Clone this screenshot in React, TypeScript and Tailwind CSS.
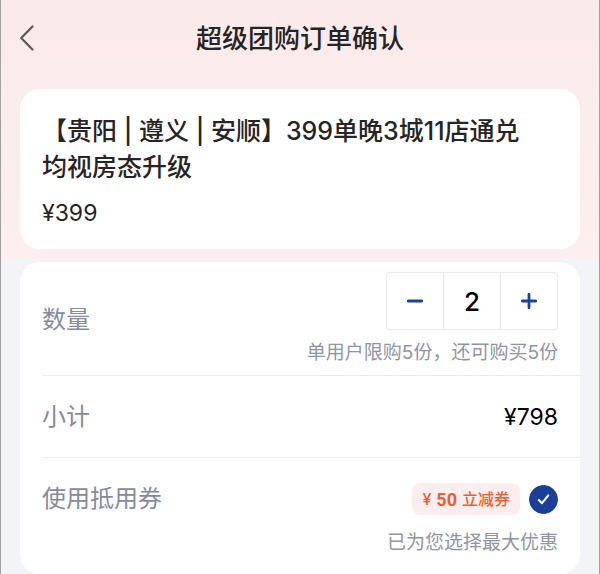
import { useState } from "react";

const PRICE = 399;
const LIMIT = 7;

const BackIcon = () => (
  <svg width="16" height="28" viewBox="0 0 16 28" fill="none" aria-hidden="true">
    <path
      d="M12.5 2.5L1.2 14L12.5 25.5"
      stroke="#5c5959"
      strokeWidth="2.2"
      strokeLinecap="round"
      strokeLinejoin="round"
    />
  </svg>
);

const MinusIcon = () => (
  <svg width="16" height="16" viewBox="0 0 16 16" fill="none" aria-hidden="true">
    <path d="M1.3 8H14.7" stroke="#1b419c" strokeWidth="2.8" strokeLinecap="round" />
  </svg>
);

const PlusIcon = () => (
  <svg width="16" height="16" viewBox="0 0 16 16" fill="none" aria-hidden="true">
    <path
      d="M1.3 8H14.7M8 1.3V14.7"
      stroke="#1b419c"
      strokeWidth="2.8"
      strokeLinecap="round"
    />
  </svg>
);

const CheckIcon = () => (
  <svg
    width="29"
    height="29"
    viewBox="0 0 29 29"
    fill="none"
    aria-hidden="true"
    className="pointer-events-none absolute inset-0"
  >
    <path
      d="M9.8 15L13 18.2L19.3 10.4"
      stroke="#fff"
      strokeWidth="2"
      strokeLinecap="round"
      strokeLinejoin="round"
    />
  </svg>
);

const App = () => {
  const [quantity, setQuantity] = useState(2);
  const [useCoupon, setUseCoupon] = useState(true);

  const changeQuantity = (value: number) => {
    if (!value || value < 1 || value > LIMIT) return;
    setQuantity(value);
  };

  return (
    <div
      lang="zh-CN"
      className="min-h-screen border-x border-[#a6a1a1] bg-[#f3f4f7] font-['Inter','Noto_Sans_CJK_SC',sans-serif] text-[#262424]"
    >
      <div className="bg-linear-to-b from-[#faebea] to-[#fcefed] px-[19px] pb-[9px]">
        <header className="grid h-[89px] grid-cols-[24px_1fr_24px] items-start pt-5">
          <button type="button" aria-label="返回" className="flex h-9 items-center">
            <BackIcon />
          </button>
          <h1 className="text-center text-[26px] leading-[38px] font-medium">
            超级团购订单确认
          </h1>
        </header>

        <section className="rounded-[20px] bg-white px-[22px] pt-6 pb-[18px]">
          <h2 className="text-[25px] leading-9 font-medium">
            【贵阳 | 遵义 | 安顺】399单晚3城11店通兑
            <br />
            均视房态升级
          </h2>
          <p className="mt-[10px] text-[23px] leading-9">¥{PRICE}</p>
        </section>
      </div>

      <main className="px-[19px] pt-1">
        <div className="rounded-[20px] bg-white pl-[22px]">
          <div className="flex items-center justify-between border-b border-[#ececef] pt-[10px] pr-[22px] pb-2">
            <label htmlFor="quantity" className="text-[24px] leading-9 text-[#848b9b]">
              数量
            </label>
            <div className="flex flex-col items-end gap-[9px]">
              <div className="flex h-[58px] w-[172px] divide-x divide-[#e9e9ec] rounded-sm border border-[#e9e9ec]">
                <button
                  type="button"
                  aria-label="减少"
                  className="flex flex-1 items-center justify-center"
                  onClick={() => changeQuantity(quantity - 1)}
                >
                  <MinusIcon />
                </button>
                <input
                  id="quantity"
                  inputMode="numeric"
                  value={quantity}
                  onChange={(e) => changeQuantity(Number(e.target.value))}
                  className="w-[57px] text-center text-[26px] font-medium text-black outline-none"
                />
                <button
                  type="button"
                  aria-label="增加"
                  className="flex flex-1 items-center justify-center"
                  onClick={() => changeQuantity(quantity + 1)}
                >
                  <PlusIcon />
                </button>
              </div>
              <p className="text-[19px] leading-7 text-[#8f95a3]">
                单用户限购5份，还可购买{LIMIT - quantity}份
              </p>
            </div>
          </div>

          <div className="flex h-[82px] items-center justify-between border-b border-[#ececef] pr-[22px]">
            <span className="text-[24px] leading-9 text-[#848b9b]">小计</span>
            <span className="text-[23px] leading-9 text-black">
              ¥{PRICE * quantity}
            </span>
          </div>

          <div className="flex items-start justify-between pt-[23px] pr-[22px] pb-[17px]">
            <label htmlFor="coupon" className="text-[24px] leading-9 text-[#848b9b]">
              使用抵用券
            </label>
            <div className="flex flex-col items-end gap-3">
              <div className="flex h-9 items-center gap-[9px]">
                <span className="flex h-8 items-center rounded-lg bg-[#fceeee] px-[10px] text-[16px] font-medium text-[#ea5f30]">
                  ¥
                  <span className="mx-[5px] font-['Roboto'] text-[18px] font-bold">50</span>
                  立减券
                </span>
                <span className="relative size-[29px]">
                  <input
                    id="coupon"
                    type="checkbox"
                    checked={useCoupon}
                    onChange={(e) => setUseCoupon(e.target.checked)}
                    className="block size-[29px] appearance-none rounded-full border border-[#c8ccd6] checked:border-[#1b3f98] checked:bg-[#1b3f98]"
                  />
                  {useCoupon && <CheckIcon />}
                </span>
              </div>
              <p className="text-[19px] leading-7 text-[#8f95a3]">
                已为您选择最大优惠
              </p>
            </div>
          </div>
        </div>
      </main>
    </div>
  );
};

export default App;
